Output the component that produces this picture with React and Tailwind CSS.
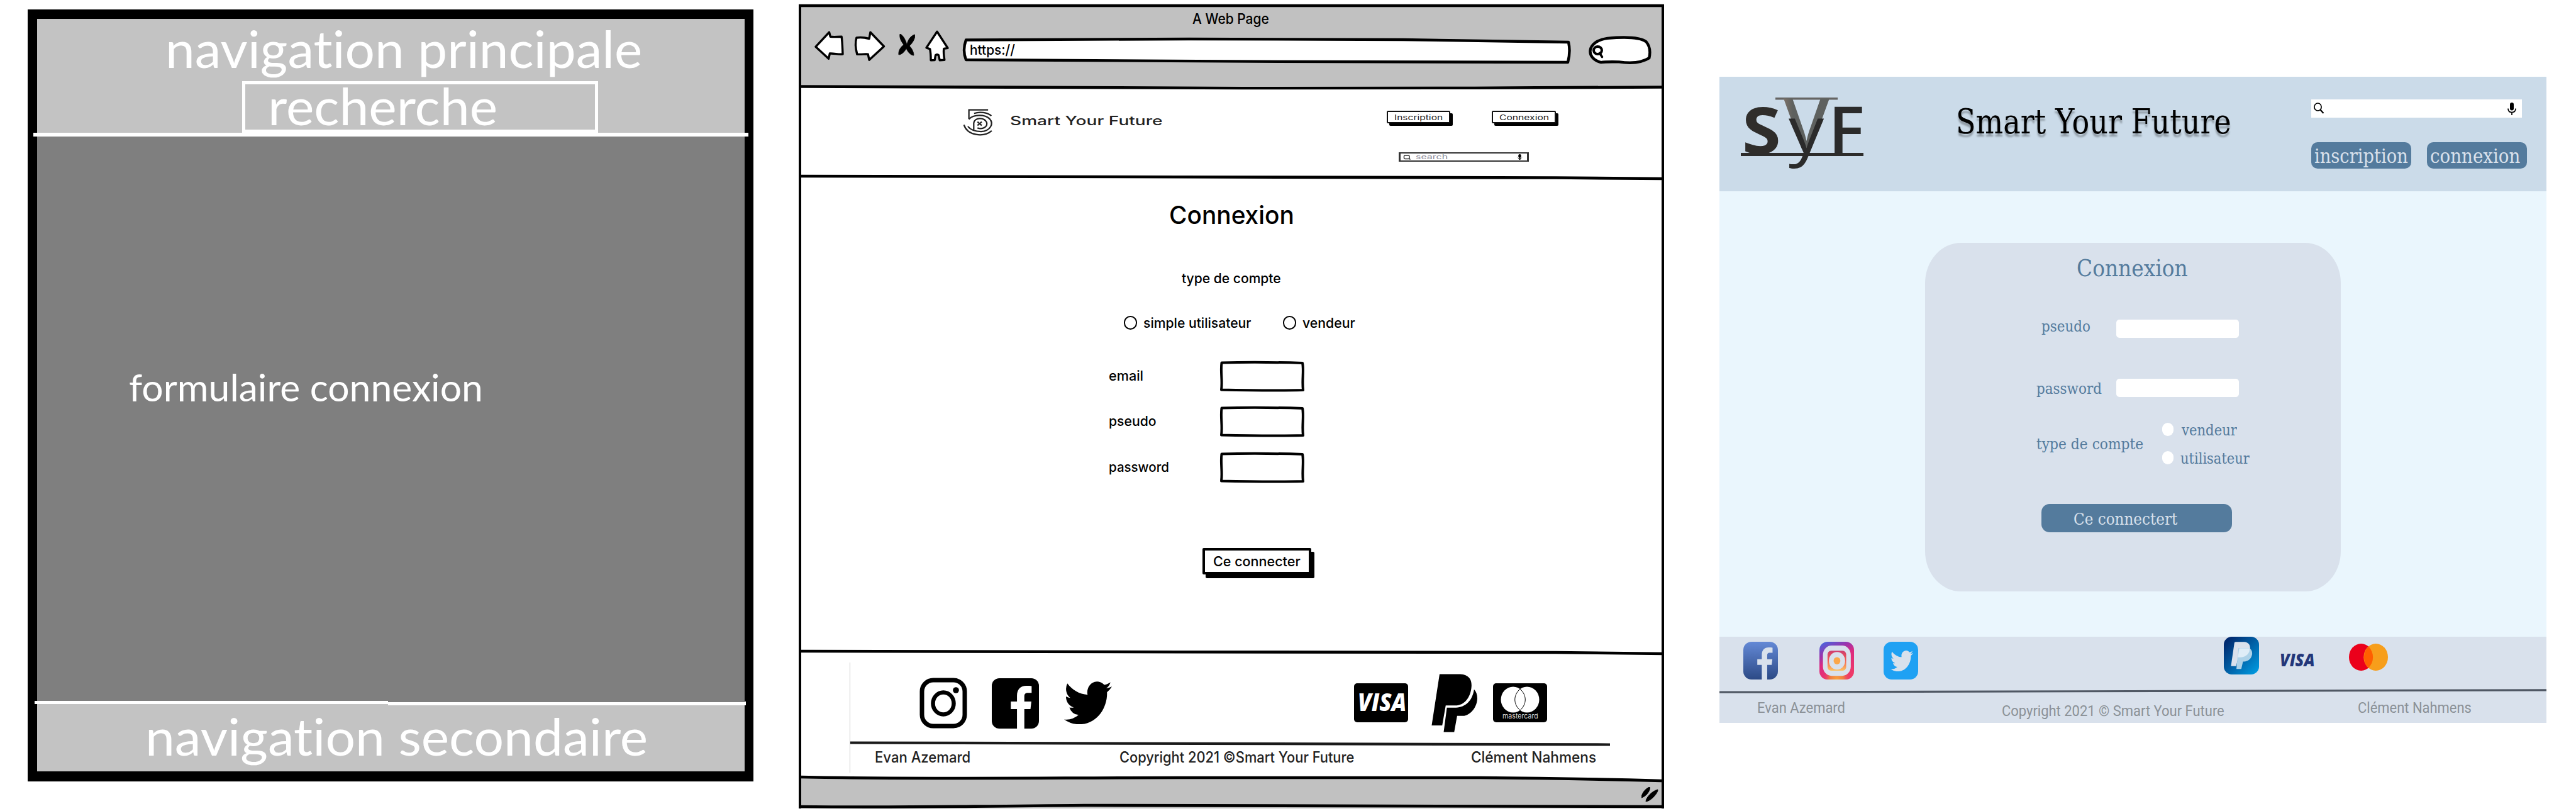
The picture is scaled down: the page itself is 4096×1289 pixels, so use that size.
import { useLayoutEffect, useRef, useState } from "react";

/* Single line of text stretched horizontally to the width of its box. */
function Fit({ className = "", children }) {
  const box = useRef(null);
  const ink = useRef(null);
  const [k, setK] = useState(1);
  useLayoutEffect(() => {
    setK(box.current.getBoundingClientRect().width / ink.current.offsetWidth);
  }, []);
  return (
    <div ref={box} className={"shrink-0 whitespace-nowrap " + className}>
      <span ref={ink} className="inline-block origin-left" style={{ transform: `scaleX(${k})` }}>
        {children}
      </span>
    </div>
  );
}

const FB =
  "M22.676 0H1.324C.593 0 0 .593 0 1.324v21.352C0 23.408.593 24 1.324 24h11.494v-9.294H9.689v-3.621h3.129V8.41c0-3.099 1.894-4.785 4.659-4.785 1.325 0 2.464.097 2.796.141v3.24h-1.921c-1.5 0-1.792.721-1.792 1.771v2.311h3.584l-.465 3.63H16.56V24h6.115c.733 0 1.325-.592 1.325-1.324V1.324C24 .593 23.408 0 22.676 0";
const BIRD =
  "M23.953 4.57a10 10 0 01-2.825.775 4.958 4.958 0 002.163-2.723c-.951.555-2.005.959-3.127 1.184a4.92 4.92 0 00-8.384 4.482C7.69 8.095 4.067 6.13 1.64 3.162a4.822 4.822 0 00-.666 2.475c0 1.71.87 3.213 2.188 4.096a4.904 4.904 0 01-2.228-.616v.06a4.923 4.923 0 003.946 4.827 4.996 4.996 0 01-2.212.085 4.936 4.936 0 004.604 3.417 9.867 9.867 0 01-6.102 2.105c-.39 0-.779-.023-1.17-.067a13.995 13.995 0 007.557 2.209c9.053 0 13.998-7.496 13.998-13.985 0-.21 0-.42-.015-.63A9.935 9.935 0 0024 4.59z";

function Zoning() {
  return (
    <section className="ml-[44px] mt-[15px] flex h-[1227px] w-[1154px] shrink-0 flex-col bg-black px-[14.5px] pt-[15px] pb-[16px] font-['Lato',sans-serif] text-white [font-variant-ligatures:none]">
      <header className="flex h-[181px] shrink-0 flex-col bg-[#c3c3c3]">
        <Fit className="mt-[5px] ml-[204px] h-[82px] w-[758px] text-[82px] leading-[82px]">navigation principale</Fit>
        <div className="mt-[12px] ml-[326px] h-[82px] w-[566px] border-[5px] border-white">
          <Fit className="-mt-[8px] ml-[36px] h-[82px] w-[365px] text-[82px] leading-[82px]">recherche</Fit>
        </div>
      </header>
      <div className="-mx-[6px] h-[6px] shrink-0 bg-white" />
      <main className="flex-1 bg-[#7f7f7f] pt-[368px]">
        <Fit className="ml-[146px] h-[60px] w-[563px] text-[60px] leading-[60px]">formulaire connexion</Fit>
      </main>
      <div className="relative -mr-[2px] -ml-[4px] flex h-[5px] shrink-0 items-start">
        <div className="h-[5px] w-[562px] bg-white" />
        <div className="h-[7px] flex-1 border-t-2 border-[#7f7f7f] bg-white" />
      </div>
      <footer className="h-[107px] shrink-0 bg-[#c3c3c3] pt-[9px]">
        <Fit className="ml-[172px] h-[82px] w-[799px] text-[82px] leading-[82px]">navigation secondaire</Fit>
      </footer>
    </section>
  );
}

function Rule({ d, cover, className = "h-[4px]" }) {
  return (
    <svg className={"relative block w-full shrink-0 overflow-visible " + className} viewBox="0 0 1368 4" preserveAspectRatio="none">
      {cover && <path d={cover} fill="#fff" />}
      <path d={d} fill="none" stroke="#000" strokeWidth="4.6" />
    </svg>
  );
}

function RoughField() {
  return (
    <svg className="h-[48px] w-[134px] shrink-0 overflow-visible" viewBox="0 0 134 48">
      <path
        d="M2.5 2.5C40 1.5 80 1.5 131 3C133.500 15 130 30 132 46C90 47 50 46.500 2 45.500C4 30 0.500 18 2.500 2.500Z"
        fill="#fff"
        stroke="#000"
        strokeWidth="4"
        strokeLinejoin="round"
      />
    </svg>
  );
}

function ChromeIcon({ box, d, className, fill = "#fff", w = 3.4 }) {
  return (
    <svg className={"shrink-0 overflow-visible " + className} viewBox={box} preserveAspectRatio="none">
      <path d={d} fill={fill} stroke="#000" strokeWidth={w} strokeLinejoin="round" strokeLinecap="round" vectorEffect="non-scaling-stroke" />
    </svg>
  );
}

function Wireframe() {
  return (
    <section className="mt-[7px] ml-[72px] flex h-[1278px] w-[1376px] shrink-0 flex-col border-x-[4px] border-black font-['Inter',sans-serif] font-medium text-black">
      <Rule d="M-4 2H1372" />
      <header className="h-[126px] shrink-0 bg-[#c1c1c1] pt-[7.500px]">
        <Fit className="ml-[622px] h-[23px] w-[122px] text-[23px] leading-[23px]">A Web Page</Fit>
        <div className="mt-[6px] flex h-[60px] items-start">
          <ChromeIcon
            className="mt-[3px] ml-[22px] h-[43px] w-[44px]"
            box="85 205 94 173"
            d="M133 206L137 234C150 238 160 234 175 234C178 270 178 310 179 346C165 350 150 340 135 342L131 375L87 299Z"
          />
          <ChromeIcon
            className="mt-[3px] ml-[20px] h-[45px] w-[46px]"
            box="219 205 98 184"
            d="M270 206L266 248C250 240 235 238 223 242C217 280 221 320 225 349C240 352 255 345 262 349L266 386L316 298Z"
          />
          <svg className="mt-[6px] ml-[22px] h-[35px] w-[27px] shrink-0" viewBox="0 0 27 35">
            <path d="M3 0C8 1 13 12 14 17C16 8 21 2 27 1C27 9 22 15 18 19C23 24 25 30 25 34C19 34 15 27 13 23C10 29 5 33 1 33C0 26 5 20 9 17C4 11 2 5 3 0Z" stroke="#000" strokeWidth=".8" />
          </svg>
          <ChromeIcon
            className="mt-[2px] ml-[18px] h-[46px] w-[34px]"
            box="457 197 72 190"
            d="M493 198L529 306L516 310C514 335 516 360 518 384L502 386L498 352Q493 345 488 352L485 385L472 386C472 360 472 340 469 312L457 304Z"
          />
          <div className="relative mt-[12px] ml-[24px] h-[42px] w-[967px] shrink-0">
            <svg className="absolute inset-0 h-full w-full overflow-visible" viewBox="0 0 967 42">
              <path
                d="M5 3.500C200 1.500 500 1.500 700 3C800 4 880 6 963 7Q966.500 22 962 39C700 39 250 37 5 35Q-1 20 5 3.500Z"
                fill="#fff"
                stroke="#000"
                strokeWidth="4.400"
                strokeLinejoin="round"
              />
            </svg>
            <Fit className="relative ml-[11px] h-[22px] w-[72px] pt-[8px] text-[22px] leading-[22px]">https://</Fit>
          </div>
          <div className="relative mt-[9px] ml-[27px] h-[45px] w-[101px] shrink-0">
            <ChromeIcon
              className="absolute inset-0 h-full w-full"
              box="1243 228 219 188"
              d="M1288 404C1235 380 1235 265 1310 244C1370 234 1425 238 1444 268C1458 300 1458 340 1454 375C1430 405 1390 412 1350 401C1320 400 1300 400 1288 404Z"
              w={4.4}
            />
            <svg className="absolute top-[15px] left-[6px] h-[21px] w-[19px]" viewBox="0 0 19 21">
              <ellipse cx="9.500" cy="8" rx="6.500" ry="6" fill="none" stroke="#000" strokeWidth="4" />
              <path d="M12.500 12.500L16.500 18.500" stroke="#000" strokeWidth="3.600" strokeLinecap="round" />
            </svg>
          </div>
        </div>
      </header>
      <Rule d="M0 .500C200 2.500 400 3 700 3S1100 3 1368 1.500" />

      <div className="flex h-[137.500px] shrink-0 items-start bg-white">
        <svg className="mt-[25px] ml-[250px] h-[56px] w-[67px] shrink-0" viewBox="0 0 270 225" preserveAspectRatio="none" fill="none" stroke="#222" strokeWidth="9">
          <path d="M190 35H67V93" />
          <path d="M100 57C135 45 185 50 211 73" />
          <path d="M67 94C95 62 170 62 200 92C228 122 205 170 145 173C105 173 80 165 60 140" />
          <path d="M98 162V118C104 82 165 80 181 115C188 143 155 162 122 150" />
          <path d="M35 130C58 200 160 212 213 168" />
          <path d="M122 111l27 23M149 111l-27 23" />
        </svg>
        <Fit className="mt-[40.500px] ml-[15px] h-[20px] w-[243px] text-[20px] leading-[20px] text-[#222]">Smart Your Future</Fit>
        <div className="mt-[35px] ml-[356px]">
          <div className="flex gap-[66px]">
            <div className="h-[20px] w-[101px] rounded-[2px] border-2 border-[#111] bg-white pt-[3px] pl-[10px] shadow-[4px_4px_0_#000]">
              <Fit className="h-[12px] w-[77px] text-[11.500px] leading-[12px] font-normal text-[#222]">Inscription</Fit>
            </div>
            <div className="h-[20px] w-[102px] rounded-[2px] border-2 border-[#111] bg-white pt-[3px] pl-[10px] shadow-[4px_4px_0_#000]">
              <Fit className="h-[12px] w-[79px] text-[11.500px] leading-[12px] font-normal text-[#222]">Connexion</Fit>
            </div>
          </div>
          <div className="mt-[46px] ml-[19px] flex h-[15px] w-[207px] items-center border-x-[3px] border-y-2 border-[#333] bg-white">
            <svg className="ml-[4px] h-[8px] w-[13px]" viewBox="0 0 13 8" fill="none" stroke="#333" strokeWidth="1.500">
              <rect x="1.500" y="1" width="8.500" height="5.500" rx="1.500" />
              <path d="M9.500 6l2 1.500" />
            </svg>
            <Fit className="ml-[7px] h-[11px] w-[51px] text-[10px] leading-[10px] font-normal text-[#8a8a98]">search</Fit>
            <svg className="ml-[109px] h-[9px] w-[11px]" viewBox="0 0 11 9">
              <ellipse cx="5.500" cy="3" rx="2.300" ry="3" />
              <path d="M0.500 4Q5.500 9 10.500 4L6.500 8V9H4.500V8Z" />
            </svg>
          </div>
        </div>
      </div>
      <Rule d="M0 1C300 2.500 900 2 1200 3.500L1372 5" />

      <main className="h-[751.500px] shrink-0 bg-white pt-[39.500px]">
        <Fit className="ml-[585px] h-[40px] w-[199px] text-[40px] leading-[40px]">Connexion</Fit>
        <Fit className="mt-[69px] ml-[605px] h-[22px] w-[158px] text-[22px] leading-[22px]">type de compte</Fit>
        <div className="mt-[49px] flex h-[22px]">
          <div className="ml-[513px] h-[22px] w-[21px] rounded-full border-2 border-black" />
          <Fit className="ml-[10px] w-[172px] text-[22px] leading-[22px]">simple utilisateur</Fit>
          <div className="ml-[50px] h-[22px] w-[21px] rounded-full border-2 border-black" />
          <Fit className="ml-[10px] w-[84px] text-[22px] leading-[22px]">vendeur</Fit>
        </div>
        <div className="mt-[49.500px] ml-[489px] grid w-[311px] grid-cols-[177px_134px] gap-y-[24.600px]">
          <Fit className="mt-[12px] h-[22px] w-[55px] text-[22px] leading-[22px]">email</Fit>
          <RoughField />
          <Fit className="mt-[12px] h-[22px] w-[76px] text-[22px] leading-[22px]">pseudo</Fit>
          <RoughField />
          <Fit className="mt-[12px] h-[22px] w-[96px] text-[22px] leading-[22px]">password</Fit>
          <RoughField />
        </div>
        <div className="mt-[104px] ml-[638px] h-[42px] w-[173px] rounded-[2px] border-[4px] border-black bg-white pt-[6.500px] pl-[13px] shadow-[5px_6px_0_#000]">
          <Fit className="h-[22px] w-[139px] text-[22px] leading-[22px]">Ce connecter</Fit>
        </div>
      </main>
      <Rule d="M0 1C300 2.500 900 2 1200 3L1372 5" />

      <footer className="h-[196px] shrink-0 bg-white pt-[15px]">
        <div className="ml-[77px] h-[175px] w-[1209px] border-l border-[#c8c8c8]">
          <div className="flex h-[126px] items-start">
            <svg className="mt-[24px] ml-[110px] h-[81px] w-[76px] shrink-0" viewBox="0 0 76 81" preserveAspectRatio="none">
              <rect x="4" y="4" width="68" height="73" rx="18" fill="#fff" stroke="#000" strokeWidth="7" />
              <ellipse cx="38" cy="41" rx="16.500" ry="17.500" fill="none" stroke="#000" strokeWidth="6.500" />
              <circle cx="58" cy="20" r="4.800" />
            </svg>
            <div className="mt-[24.500px] ml-[39px] h-[80px] w-[75px] shrink-0 overflow-hidden rounded-[12px]">
              <svg className="h-full w-full" viewBox="0 0 24 24" preserveAspectRatio="none">
                <path d={FB} />
              </svg>
            </div>
            <svg className="mt-[30px] ml-[40px] h-[68px] w-[76px] shrink-0" viewBox="0 2.200 24 19.500" preserveAspectRatio="none">
              <path d={BIRD} />
            </svg>
            <div className="mt-[33px] ml-[385px] flex h-[62px] w-[86px] shrink-0 rounded-[5px] bg-black">
              <Fit className="mt-[10px] ml-[6px] h-[38px] w-[77px] font-['Open_Sans',sans-serif] text-[38px] leading-[38px] font-extrabold text-white italic">VISA</Fit>
            </div>
            <svg className="mt-[18px] ml-[37px] h-[93px] w-[73px] shrink-0" viewBox="713 222 157 374" preserveAspectRatio="none">
              <path d="M741 224H812C843 228 852 262 850 305C847 375 825 424 795 424H762L750 552H714Z" />
              <path d="M859 322C866 335 870 355 870 380C868 450 840 488 825 490H801L791 594H755L766 438H797C830 436 853 395 859 322Z" />
            </svg>
            <div className="mt-[33px] ml-[25px] h-[62px] w-[86px] shrink-0 rounded-[5px] bg-black pt-[5px]">
              <svg className="ml-[12px] h-[42px] w-[62px]" viewBox="0 0 62 42">
                <ellipse cx="20" cy="21" rx="19.500" ry="20.500" fill="#fff" />
                <ellipse cx="42" cy="21" rx="19.500" ry="20.500" fill="#fff" />
                <path d="M31 4C20 14 20 28 31 38C42 28 42 14 31 4Z" fill="none" stroke="#000" />
              </svg>
              <Fit className="ml-[15px] h-[11px] w-[57px] text-[11px] leading-[11px] font-normal text-[#ddd]">mastercard</Fit>
            </div>
          </div>
          <svg className="block h-[5px] w-full overflow-visible" viewBox="0 0 1209 5">
            <path d="M0 1.500L1209 4.500" stroke="#1a1a1a" strokeWidth="4.200" />
          </svg>
          <div className="mt-[8px] flex h-[24px] text-[24px] leading-[24px] text-[#222]">
            <Fit className="ml-[39px] w-[152px]">Evan Azemard</Fit>
            <Fit className="ml-[237px] w-[373px]">Copyright 2021 ©Smart Your Future</Fit>
            <Fit className="ml-[186px] w-[199px]">Clément Nahmens</Fit>
          </div>
        </div>
      </footer>
      <div className="flex flex-1 flex-col bg-[#c1c1c1]">
        <Rule d="M0 1C200 5 400 2 600 2S900 2 1080 2Q1220 3 1368 7" cover="M0 -1V1C200 5 400 2 600 2S900 2 1080 2Q1220 3 1368 7V-1Z" />
        <div className="flex flex-1 justify-end">
          <svg className="mt-[13px] mr-[4px] h-[25px] w-[28px]" viewBox="0 0 28 25">
            <path d="M0 17C0 11 6 2 13 0C15 2 10 14 0 17ZM7 23C7 17 17 6 26 4C27 8 16 22 7 23Z" stroke="#000" />
          </svg>
        </div>
        <Rule d="M-4 1C150 3 200 1 450 -1C600 -1 900 0 1372 1" />
      </div>
    </section>
  );
}

function SyfLogo() {
  return (
    <svg className="mt-[32px] ml-[34px] h-[116px] w-[196px] shrink-0 overflow-visible" viewBox="0 0 196 116" fontFamily="Open Sans, sans-serif" fontSize="100">
      <defs>
        <linearGradient id="vee" x1="0" x2="1">
          <stop offset="0" stopColor="#7d7269" />
          <stop offset=".2" stopColor="#5e615f" />
          <stop offset="1" stopColor="#5e615f" />
        </linearGradient>
      </defs>
      <rect x="0" y="89" width="195" height="5" fill="#2d2c2b" />
      <text transform="translate(2 89.500) scale(1.120 1.020)" fontWeight="700" fill="#2f2d2b">S</text>
      <text transform="translate(139 89) scale(1.080 1.040)" fontWeight="600" fill="#2b2b2b">F</text>
      <rect x="55" y="1" width="99" height="3.500" fill="#666563" />
      <text transform="translate(68 83) scale(1.170 1.120)" fontWeight="600" fill="url(#vee)">V</text>
      <text transform="translate(76 89) scale(1.120 1.020)" fontWeight="500" fill="#2b2b2b">y</text>
    </svg>
  );
}

function Mockup() {
  return (
    <section className="mt-[122px] ml-[88px] h-[1027px] w-[1315px] shrink-0 font-['DejaVu_Serif',serif] text-[#547b9d]">
      <header className="flex h-[182px] items-start bg-[#cbdbe9]">
        <SyfLogo />
        <Fit className="mt-[45px] ml-[146px] h-[54px] w-[438px] text-[54px] leading-[54px] text-black [text-shadow:0_5px_3px_rgba(0,0,0,0.3)]">Smart Your Future</Fit>
        <div className="mt-[36px] ml-[127px]">
          <div className="flex h-[29px] w-[335px] items-start bg-white">
            <svg className="mt-[5px] ml-[4px] h-[18px] w-[17px]" viewBox="0 0 17 18" fill="none" stroke="#000">
              <ellipse cx="6.500" cy="7" rx="5.600" ry="6" strokeWidth="1.700" />
              <path d="M10.500 11.500L15.500 17" strokeWidth="2.200" />
            </svg>
            <svg className="mt-[5px] ml-[291px] h-[20px] w-[14px]" viewBox="0 0 14 20">
              <rect x="4" y="0" width="6" height="12.500" rx="3" />
              <path d="M1 9.500Q1 15.500 7 15.500T13 9.500M7 15.500V20" fill="none" stroke="#000" strokeWidth="1.700" />
            </svg>
          </div>
          <div className="mt-[39px] flex gap-[25px] text-[#d9e1ec]">
            <div className="h-[42px] w-[159px] rounded-[10px] bg-[#547b9d] pt-[6.500px] pl-[5px]">
              <Fit className="h-[31px] w-[149px] text-[31px] leading-[31px]">inscription</Fit>
            </div>
            <div className="h-[42px] w-[159px] rounded-[10px] bg-[#547b9d] pt-[6.500px] pl-[5px]">
              <Fit className="h-[31px] w-[143px] text-[31px] leading-[31px]">connexion</Fit>
            </div>
          </div>
        </div>
      </header>

      <main className="h-[708px] bg-[#eaf6fd] pt-[82px] pl-[327px]">
        <form className="h-[554px] w-[661px] rounded-[57px/64px] bg-[#d9e1ec] pt-[21px] text-[25px] leading-[25px]">
          <Fit className="ml-[241px] h-[38px] w-[177px] text-[37.500px] leading-[38px]">Connexion</Fit>
          <div className="mt-[61px] flex h-[31px] items-start">
            <Fit className="ml-[185px] w-[78px]">pseudo</Fit>
            <div className="mt-[2px] ml-[41px] h-[29px] w-[195px] rounded-[5px] bg-white" />
          </div>
          <div className="mt-[65px] flex h-[29px] items-start">
            <Fit className="mt-[3px] ml-[177px] w-[104px]">password</Fit>
            <div className="ml-[23px] h-[29px] w-[195px] rounded-[5px] bg-white" />
          </div>
          <div className="mt-[40px] flex h-[70px] items-start">
            <Fit className="mt-[22px] ml-[177px] w-[170px]">type de compte</Fit>
            <div className="ml-[30px] flex flex-col gap-[20px]">
              <div className="flex h-[25px] items-start">
                <div className="mt-px h-[21px] w-[18px] rounded-full bg-white" />
                <Fit className="ml-[13px] w-[88px]">vendeur</Fit>
              </div>
              <div className="flex h-[25px] items-start">
                <div className="mt-px h-[21px] w-[18px] rounded-full bg-white" />
                <Fit className="ml-[11px] w-[110px]">utilisateur</Fit>
              </div>
            </div>
          </div>
          <div className="mt-[60px] ml-[185px] h-[45px] w-[303px] rounded-[13px] bg-[#547b9d] pt-[10.500px] pl-[51px] text-[#d9e1ec]">
            <Fit className="h-[26px] w-[165px] text-[25.500px] leading-[26px]">Ce connectert</Fit>
          </div>
        </form>
      </main>

      <footer className="h-[137px] bg-[#d9e1ec] font-['Roboto',sans-serif]">
        <div className="flex h-[83px] items-start">
          <div className="mt-[8px] ml-[38px] h-[60px] w-[55px] shrink-0 overflow-hidden rounded-[13px]">
            <svg className="h-full w-full" viewBox="0 0 24 24" preserveAspectRatio="none">
              <linearGradient id="fb" x1="0" x2="0" y1="0" y2="1">
                <stop offset="0" stopColor="#6489d6" />
                <stop offset="1" stopColor="#2c4a86" />
              </linearGradient>
              <path d={FB} fill="url(#fb)" />
            </svg>
          </div>
          <svg className="mt-[8px] ml-[66px] h-[60px] w-[55px] shrink-0" viewBox="403 137 128 240" preserveAspectRatio="none">
            <defs>
              <linearGradient id="ig1" x1=".15" x2=".6" y1="0" y2="1">
                <stop offset="0" stopColor="#4b63dc" />
                <stop offset=".28" stopColor="#9a35ae" />
                <stop offset=".5" stopColor="#dd2a80" />
                <stop offset="1" stopColor="#ee3a68" />
              </linearGradient>
              <radialGradient id="ig2" cx=".5" cy="1" r=".4">
                <stop offset="0" stopColor="#f9a23c" />
                <stop offset=".5" stopColor="#f07a42" />
                <stop offset="1" stopColor="#ee3a68" stopOpacity="0" />
              </radialGradient>
              <linearGradient id="ig3" x1="0" x2="0" y1="0" y2="1">
                <stop offset="0" stopColor="#cf3f72" />
                <stop offset=".45" stopColor="#f1584f" />
                <stop offset="1" stopColor="#fdc463" />
              </linearGradient>
            </defs>
            <rect x="403" y="137" width="128" height="240" rx="30" ry="52" fill="url(#ig1)" />
            <rect x="403" y="137" width="128" height="240" rx="30" ry="52" fill="url(#ig2)" />
            <rect x="416" y="161" width="103" height="193" rx="32" ry="60" fill="#d9e1ec" />
            <rect x="433" y="194" width="69" height="127" rx="13" ry="24" fill="url(#ig3)" />
            <ellipse cx="468" cy="258" rx="30" ry="56" fill="#d9e1ec" />
            <ellipse cx="468" cy="258" rx="12.500" ry="23" fill="#fba74a" />
          </svg>
          <div className="mt-[8px] ml-[47px] h-[60px] w-[55px] shrink-0 rounded-[13px] bg-[#1fa1f3] pt-[14px] pl-[10.500px]">
            <svg className="h-[33px] w-[36px]" viewBox="0 2.200 24 19.500" preserveAspectRatio="none">
              <path d={BIRD} fill="#d9e1ec" />
            </svg>
          </div>
          <svg className="ml-[486px] h-[60px] w-[56px] shrink-0" viewBox="321 104 123 240" preserveAspectRatio="none">
            <linearGradient id="pp" x1="0" x2="1" y1="0" y2="1">
              <stop offset=".1" stopColor="#012b70" />
              <stop offset="1" stopColor="#00a0e6" />
            </linearGradient>
            <rect x="321" y="104" width="123" height="240" rx="28" ry="50" fill="url(#pp)" />
            <path d="M358 142Q359 137 364 137H392C407 139 413 155 413 178C411 220 398 232 376 234L371 240L364 291H346Z" fill="#d9e1ec" />
            <path d="M372 176H408C416 180 421 195 420 215C417 248 405 260 392 262H388L382 309H365Z" fill="#add2e8" />
            <path d="M375 178H411C413 205 401 233 380 235H370Z" fill="#dfedf7" />
          </svg>
          <Fit className="mt-[21px] ml-[33px] h-[29px] w-[56px] font-['Open_Sans',sans-serif] text-[29px] leading-[29px] font-extrabold text-[#233679] italic">VISA</Fit>
          <svg className="mt-[10.500px] ml-[54px] h-[43px] w-[62px] shrink-0" viewBox="0 0 62 43">
            <ellipse cx="19.300" cy="21.500" rx="19.300" ry="21.500" fill="#eb001b" />
            <ellipse cx="42.700" cy="21.500" rx="19.300" ry="21.500" fill="#f79e1b" />
            <path d="M31 4.400C21.500 14 21.500 29 31 38.600C40.500 29 40.500 14 31 4.400Z" fill="#ff5f00" />
          </svg>
        </div>
        <svg className="block h-[7px] w-full" viewBox="0 0 1315 7" preserveAspectRatio="none">
          <path d="M0 5.200L1315 1.800" stroke="#505864" strokeWidth="3.200" />
        </svg>
        <div className="flex items-start pt-[10px] text-[24.500px] leading-[25px] text-[#8b9197]">
          <Fit className="ml-[60px] w-[140px]">Evan Azemard</Fit>
          <Fit className="mt-[5px] ml-[249px] w-[354px]">Copyright 2021 © Smart Your Future</Fit>
          <Fit className="ml-[212px] w-[181px]">Clément Nahmens</Fit>
        </div>
      </footer>
    </section>
  );
}

export default function App() {
  return (
    <div className="flex h-[1289px] w-[4096px] items-start overflow-hidden bg-white">
      <Zoning />
      <Wireframe />
      <Mockup />
    </div>
  );
}
